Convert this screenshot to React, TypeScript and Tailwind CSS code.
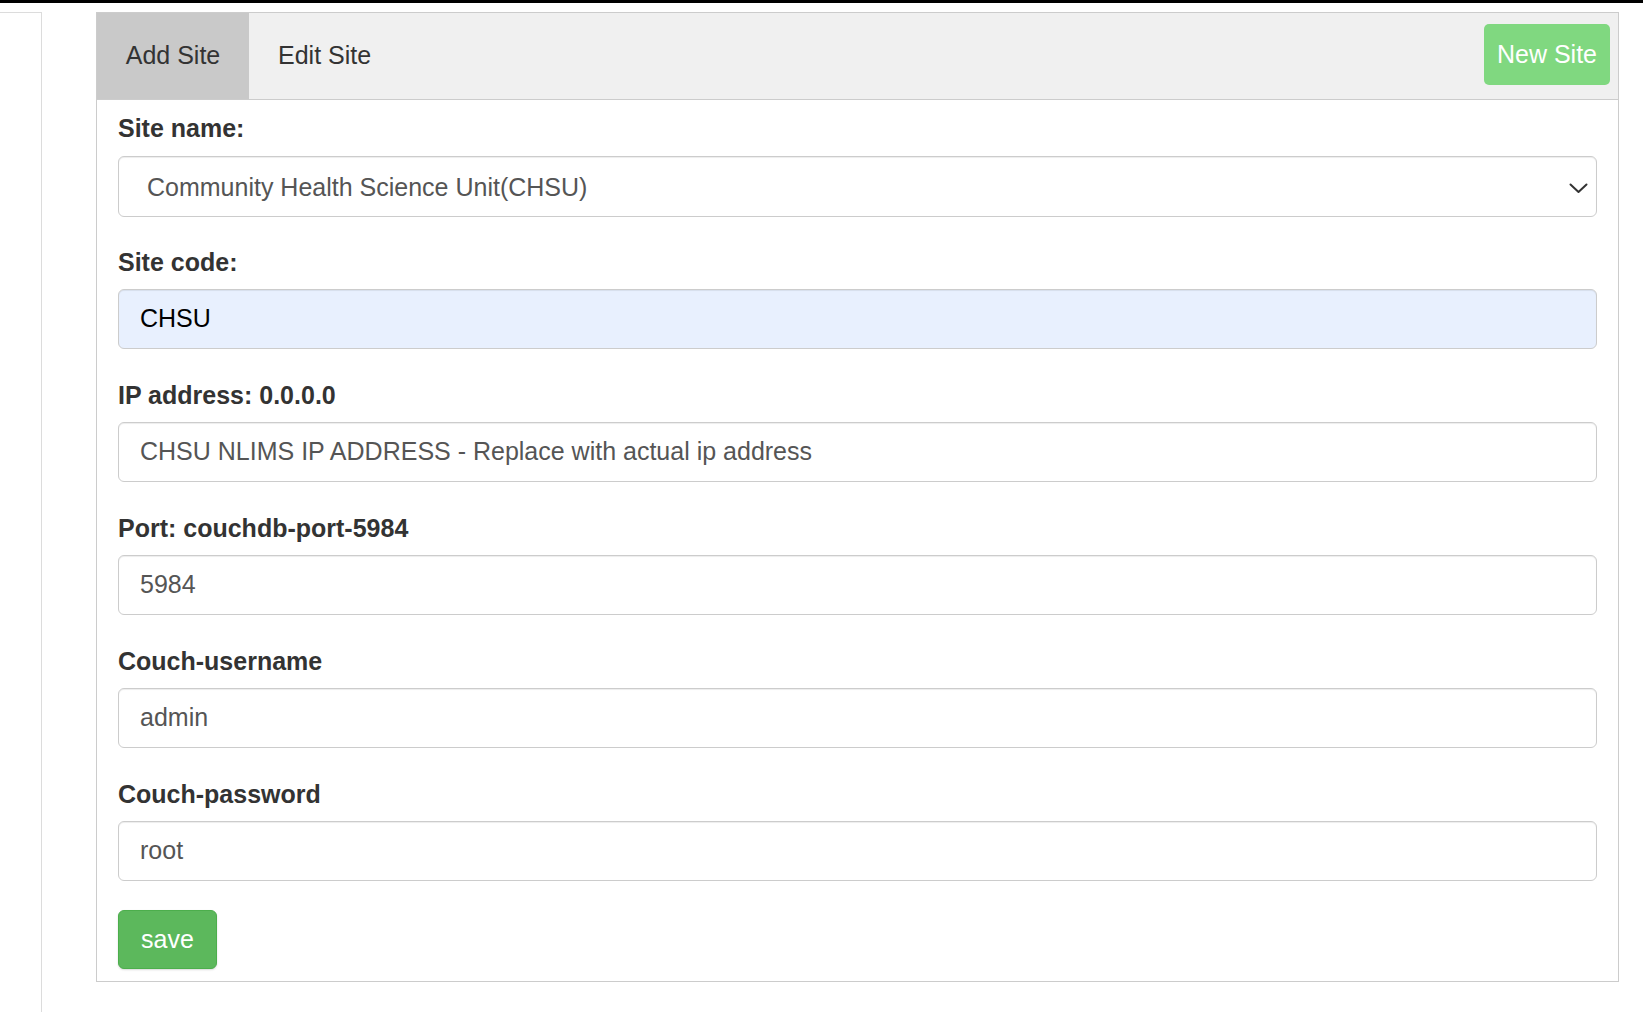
import React from 'react';

// Formulaire de sites — onglets + champs
const champs = [
  { label: 'Site code:', valeur: 'CHSU', autofill: true },
  { label: 'IP address: 0.0.0.0', valeur: 'CHSU NLIMS IP ADDRESS - Replace with actual ip address' },
  { label: 'Port: couchdb-port-5984', valeur: '5984' },
  { label: 'Couch-username', valeur: 'admin' },
  { label: 'Couch-password', valeur: 'root' },
];

function Chevron() {
  return (
    <svg width="19" height="11" viewBox="0 0 19 11" fill="none">
      <path d="M1.5 1.5 L9.5 9 L17.5 1.5" stroke="#333" strokeWidth="2" strokeLinecap="round" strokeLinejoin="round" />
    </svg>
  );
}

export default function App() {
  return (
    <div className="min-h-screen flex flex-col bg-white text-[25px] font-['Liberation_Sans',Arial,sans-serif]">
      <div className="h-[3px] bg-black" />
      <div className="flex flex-1 pt-[9px]">
        <div className="w-[42px] border-t border-r border-[#dcdcdc]" />
        <div className="ml-[54px] w-[1523px] self-start border border-[#cccccc]">
          {/* onglets */}
          <div className="h-[87px] flex items-stretch bg-[#f0f0f0] border-b border-[#cccccc]">
            <div className="w-[152px] flex items-center justify-center bg-[#c9c9c9] text-[#333]">Add Site</div>
            <div className="px-[29px] flex items-center text-[#333]">Edit Site</div>
            <div className="flex-1" />
            <div className="pt-[11px] pr-[8px]">
              <button className="h-[61px] px-[13px] rounded-[5px] bg-[#80d880] text-white leading-none">New Site</button>
            </div>
          </div>

          <div className="px-[21px] pt-[13px] pb-[12px]">
            <label className="block h-[30px] leading-[30px] font-bold text-[#333] mb-[13px]">Site name:</label>
            <div className="h-[61px] flex items-center justify-between border border-[#cccccc] rounded-[6px] pl-[28px] pr-[8px] pt-[3px] text-[#555] shadow-[inset_0_1px_1px_rgba(0,0,0,0.075)] mb-[30px]">
              <span>Community Health Science Unit(CHSU)</span>
              <Chevron />
            </div>

            {champs.map(c => (
              <div key={c.label}>
                <label className="block h-[30px] leading-[30px] font-bold text-[#333] mb-[12px]">{c.label}</label>
                <div
                  className={`h-[60px] flex items-center border border-[#cccccc] rounded-[6px] px-[21px] shadow-[inset_0_1px_1px_rgba(0,0,0,0.075)] mb-[31px] ${
                    c.autofill ? 'bg-[#e8f0fe] text-black' : 'bg-white text-[#555]'
                  }`}
                >
                  {c.valeur}
                </div>
              </div>
            ))}

            <button className="-mt-[2px] h-[59px] px-[22px] rounded-[6px] bg-[#5cb85c] border border-[#4cae4c] text-white shadow-[0_1px_2px_rgba(0,0,0,0.15)]">
              save
            </button>
          </div>
        </div>
      </div>
    </div>
  );
}
